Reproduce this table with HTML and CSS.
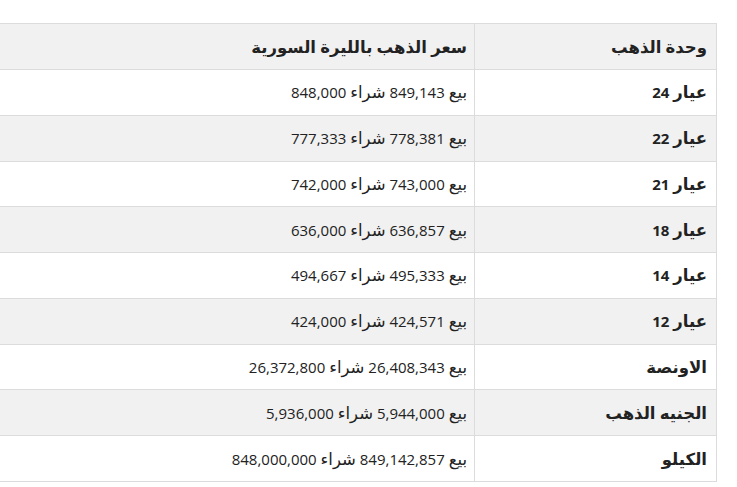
FILE: index.html
```html
<!DOCTYPE html>
<html lang="ar" dir="rtl">
<head>
<meta charset="utf-8">
<link rel="stylesheet" href="styles.css">
</head>
<body>
<div class="wrap">
<table class="prices">
<thead>
<tr><th class="unit"><span class="ar">وحدة الذهب</span></th><th class="price"><span class="ar">سعر الذهب بالليرة السورية</span></th></tr>
</thead>
<tbody>
<tr><td class="unit"><span class="ar">عيار</span> 24</td><td class="price"><span class="ar">بيع</span> 849,143 <span class="ar">شراء</span> 848,000</td></tr>
<tr><td class="unit"><span class="ar">عيار</span> 22</td><td class="price"><span class="ar">بيع</span> 778,381 <span class="ar">شراء</span> 777,333</td></tr>
<tr><td class="unit"><span class="ar">عيار</span> 21</td><td class="price"><span class="ar">بيع</span> 743,000 <span class="ar">شراء</span> 742,000</td></tr>
<tr><td class="unit"><span class="ar">عيار</span> 18</td><td class="price"><span class="ar">بيع</span> 636,857 <span class="ar">شراء</span> 636,000</td></tr>
<tr><td class="unit"><span class="ar">عيار</span> 14</td><td class="price"><span class="ar">بيع</span> 495,333 <span class="ar">شراء</span> 494,667</td></tr>
<tr><td class="unit"><span class="ar">عيار</span> 12</td><td class="price"><span class="ar">بيع</span> 424,571 <span class="ar">شراء</span> 424,000</td></tr>
<tr><td class="unit"><span class="ar">الاونصة</span></td><td class="price"><span class="ar">بيع</span> 26,408,343 <span class="ar">شراء</span> 26,372,800</td></tr>
<tr><td class="unit"><span class="ar">الجنيه الذهب</span></td><td class="price"><span class="ar">بيع</span> 5,944,000 <span class="ar">شراء</span> 5,936,000</td></tr>
<tr><td class="unit"><span class="ar">الكيلو</span></td><td class="price"><span class="ar">بيع</span> 849,142,857 <span class="ar">شراء</span> 848,000,000</td></tr>
</tbody>
</table>
</div>
</body>
</html>
```
FILE: styles.css
```css
html, body {
  margin: 0;
  padding: 0;
  background: #fff;
  overflow: hidden;
}
body {
  font-family: "Open Sans", "DejaVu Sans", sans-serif;
  color: #222;
  font-size: 15px;
}
.wrap {
  display: flex;
  justify-content: flex-end;
  padding-top: 23px;
  padding-right: 20px;
  direction: ltr;
}
.prices {
  direction: rtl;
  flex: none;
  width: 760px;
  border-collapse: collapse;
  border: 1px solid #dcdcdc;
}
.prices th, .prices td {
  height: 45.78px;
  padding: 0 8px;
  text-align: right;
  border: 1px solid #dcdcdc;
  box-sizing: border-box;
  vertical-align: middle;
  white-space: nowrap;
}
.prices th {
  height: 46px;
  background: #f1f1f1;
  font-weight: bold;
}
.prices .unit {
  width: 242px;
  font-weight: bold;
  padding-right: 9px;
}
.prices .price {
  padding-right: 7px;
}
.prices tbody tr:nth-child(even) td {
  background: #f1f1f1;
}
.ar {
  font-size: 16.5px;
  line-height: 1;
}
```
